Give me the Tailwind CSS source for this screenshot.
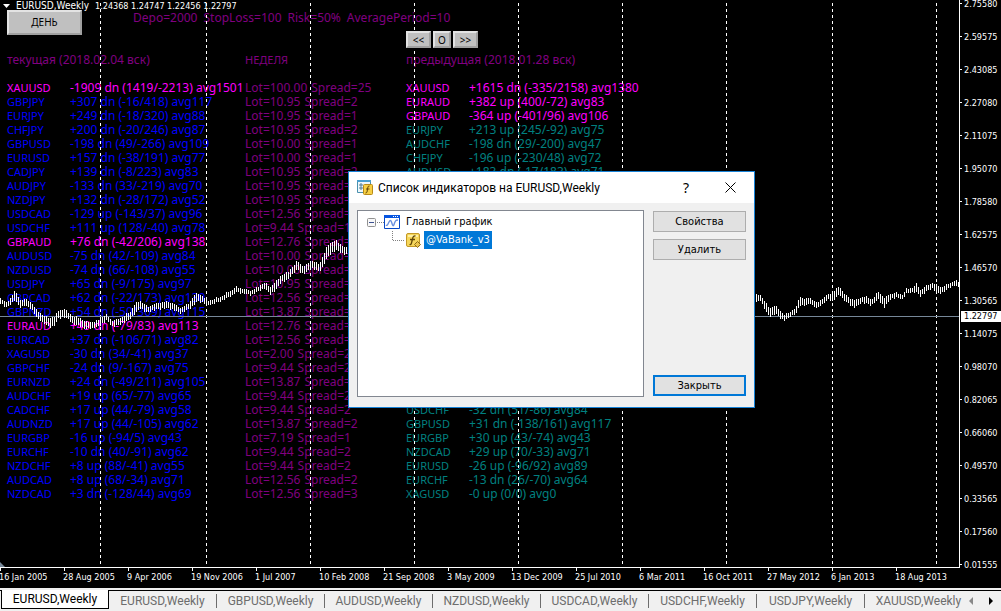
<!DOCTYPE html>
<html lang="ru">
<head>
<meta charset="utf-8">
<title>EURUSD,Weekly</title>
<script src="https://cdn.jsdelivr.net/npm/@tailwindcss/browser@4"></script>
</head>
<body class="flex min-h-screen flex-col overflow-hidden bg-black font-['Noto_Sans','Open_Sans',sans-serif] text-xs">
<main class="flex flex-1">
  <section class="relative min-w-0 flex-1 overflow-hidden border-r border-b border-white whitespace-nowrap text-[#800080]">
    <header class="flex h-3 items-center gap-1.5 pl-[3px] font-['DejaVu_Sans_Condensed','DejaVu_Sans',sans-serif] text-[9px] leading-3 text-white">
      <svg class="h-1 w-[7px]" viewBox="0 0 7 4" fill="#fff"><path d="M0 0H7L3.5 4Z"/></svg>
      <h1 class="text-[10px]">EURUSD,Weekly</h1><span>1.24368 1.24747 1.22456 1.22797</span>
    </header>
    <div class="flex h-10 items-start">
      <button class="-mt-0.5 ml-[7px] h-[25px] w-[75px] border-2 border-t-[#e3e3e3] border-r-[#a0a0a0] border-b-[#a0a0a0] border-l-[#e3e3e3] bg-[#c0c0c0] text-[10px] text-black">ДЕНЬ</button>
      <p class="ml-[51px] flex gap-1.5 leading-3"><span>Depo=2000</span><span>StopLoss=100</span><span>Risk=50%</span><span>AveragePeriod=10</span></p>
    </div>
    <div class="grid grid-cols-[238px_161px_1fr] pl-[7px]">
      <h2 class="flex h-[29px] items-start leading-4">текущая (2018.02.04 вск)</h2>
      <h2 class="text-[11px] leading-4">НЕДЕЛЯ</h2>
      <div class="relative">
        <nav class="absolute -top-[21px] left-0 z-10 flex gap-0.5 text-[10px] leading-3 text-black">
          <button class="h-[17px] w-[25px] border-2 border-t-[#e3e3e3] border-r-[#a0a0a0] border-b-[#a0a0a0] border-l-[#e3e3e3] bg-[#c0c0c0]">&lt;&lt;</button>
          <button class="h-[17px] w-[18px] border-2 border-t-[#e3e3e3] border-r-[#a0a0a0] border-b-[#a0a0a0] border-l-[#e3e3e3] bg-[#c0c0c0]">O</button>
          <button class="h-[17px] w-[25px] border-2 border-t-[#e3e3e3] border-r-[#a0a0a0] border-b-[#a0a0a0] border-l-[#e3e3e3] bg-[#c0c0c0]">&gt;&gt;</button>
        </nav>
        <h2 class="leading-4">предыдущая (2018.01.28 вск)</h2>
      </div>
      <table class="col-span-2 w-full table-fixed border-collapse text-left"><colgroup><col class="w-[63px]"><col class="w-[175px]"><col></colgroup><tbody id="current"></tbody></table>
      <table class="w-80 table-fixed border-collapse self-start text-left"><colgroup><col class="w-[63px]"><col></colgroup><tbody id="previous"></tbody></table>
    </div>
    <svg class="pointer-events-none absolute inset-0 h-full w-full" aria-hidden="true">
      <path d="M100.5 3V564M206.5 3V564M310.5 3V564M414.5 3V564M518.5 3V564M622.5 3V564M726.5 3V564M832.5 3V564M936.5 3V564" stroke="#fff" stroke-dasharray="3 3" fill="none"/>
      <path d="M0 316.5H1000" stroke="#778899"/>
      <path id="bars" stroke="#fff" shape-rendering="crispEdges"/>
      <path d="M0 562L5 567H0Z" fill="#778899"/>
    </svg>
    <section role="dialog" aria-labelledby="dt" class="absolute top-[171px] left-[348px] flex h-[237px] w-[407px] flex-col border border-[#1883d7] bg-[#f0f0f0] text-black">
      <header class="flex h-[31px] items-center bg-white pl-2">
        <svg class="h-4 w-4" viewBox="0 0 16 16"><path d="M.5.5H13.5V12.5H.5Z" fill="#eef7fc" stroke="#4b91ae"/><path d="M0 0H14V2H0Z" fill="#4a9fd0"/><path d="M4 3V10M2 5H6M2 8H6" stroke="#527b91" fill="none"/><rect x="6.5" y="4.5" width="9" height="10" rx="1" fill="#f6cf45" stroke="#b88a16"/><path d="M12.500 6Q11 5.500 10.700 8L10 12Q9.700 13 8.500 13M9 9H12.500" stroke="#654808" fill="none"/></svg>
        <h2 id="dt" class="ml-[5px] flex-1 font-[Roboto,sans-serif]">Список индикаторов на EURUSD,Weekly</h2>
        <button class="w-8 text-sm" aria-label="Справка">?</button>
        <button class="mr-2 ml-3 flex h-8 w-8 items-center justify-center" aria-label="Закрыть окно"><svg class="h-[11px] w-[11px]" viewBox="0 0 11 11"><path d="M.5.5L10.500 10.500M10.500.5L.5 10.500" stroke="#000" fill="none"/></svg></button>
      </header>
      <div class="flex flex-1 gap-[9px] px-2 pt-[7px] pb-2.5 font-['DejaVu_Sans_Condensed','DejaVu_Sans',sans-serif] text-[11px]">
        <ul class="flex-1 border border-[#828790] bg-white pt-0.5 pl-[9px] leading-[18px]">
          <li class="flex h-[18px] items-center">
            <svg class="h-[18px] w-[34px]" viewBox="0 0 34 18"><rect x=".5" y="5.500" width="8" height="8" rx="1" fill="#f8f8f8" stroke="#919191"/><path d="M2 9.500H7" stroke="#3c5191"/><path d="M10 9.500H17" stroke="#808080" stroke-dasharray="1 1"/><path d="M17.500 2.500H32.500V15.500H17.500Z" fill="#fff" stroke="#0748c7"/><path d="M17 2H33V5H17Z" fill="#0755e0"/><path d="M26 3.500H27M28 3.500H29M30 3.500H31" stroke="#fff"/><path d="M19 12Q20 13 21 11L22 9Q23.500 6 24.500 9L25.500 12Q26.500 14 27.500 10L28.500 8Q29 7 31 7" stroke="#6b91df" stroke-width="1.400" fill="none"/></svg>
            <span class="ml-[5px]">Главный график</span>
          </li>
          <li class="flex h-[18px] items-center">
            <svg class="h-[18px] w-[54px]" viewBox="0 0 54 18"><path d="M25.500 0V9M26 9.500H37" stroke="#808080" stroke-dasharray="1 1" fill="none"/><rect x="39.500" y="2.500" width="13" height="13" rx="1.500" fill="#f6d75b" stroke="#c49926"/><path d="M41 4H51V6H41Z" fill="#fff0a3"/><path d="M48.500 5Q46 4.500 45.500 8L44.500 12Q44 14 42.500 13.500M43 8.500H48" stroke="#614607" stroke-width="1.300" fill="none"/><path d="M50.500 10.500L53.500 13.500L50.500 16.500L47.500 13.500Z" fill="#edc64c" stroke="#8d6b17"/></svg>
            <span class="ml-[3px] bg-[#0078d7] px-[2px] text-white">@VaBank_v3</span>
          </li>
        </ul>
        <div class="flex w-[93px] flex-col gap-[7px] pt-px">
          <button class="h-[21px] border border-[#adadad] bg-[#e1e1e1] pt-0.5">Свойства</button>
          <button class="h-[21px] border border-[#adadad] bg-[#e1e1e1] pt-0.5">Удалить</button>
          <button class="mt-auto mb-px h-[21px] border-2 border-[#0078d7] bg-[#e1e1e1] pt-0.5">Закрыть</button>
        </div>
      </div>
    </section>
  </section>
  <aside class="relative w-[41px] font-['DejaVu_Sans_Condensed','DejaVu_Sans',sans-serif] text-[9px] text-white">
    <ol id="prices" class="-mt-[13px] -mb-4"></ol>
    <output class="absolute top-[311px] right-0 left-px bg-white pl-[3px] leading-[11px] text-black">1.22797</output>
  </aside>
</main>
<ol id="dates" class="flex h-5 overflow-hidden bg-black font-['DejaVu_Sans_Condensed','DejaVu_Sans',sans-serif] text-[9px] whitespace-nowrap text-white"></ol>
<footer class="flex h-[23px] items-start border-t-2 border-[#f0f0f0] bg-[#f0f0f0] font-[Roboto,sans-serif] text-xs text-[#6d6d6d]">
  <nav id="tabs" class="flex h-5 min-w-0 flex-1 border-t border-black pl-px whitespace-nowrap"></nav>
  <div class="flex h-5 w-9 items-center gap-4 border-t border-black pl-1">
    <button aria-label="Назад"><svg class="h-2 w-1" viewBox="0 0 4 8"><path d="M4 0V8L0 4Z" fill="#888"/></svg></button>
    <button aria-label="Вперёд"><svg class="h-2 w-1" viewBox="0 0 4 8"><path d="M0 0V8L4 4Z" fill="#000"/></svg></button>
  </div>
</footer>
<script>
const current = `XAUUSD|-1909 dn (1419/-2213) avg1501|100.00|25
GBPJPY|+307 dn (-16/418) avg117|10.95|2
EURJPY|+249 dn (-18/320) avg88|10.95|1
CHFJPY|+200 dn (-20/246) avg87|10.95|2
GBPUSD|-198 dn (49/-266) avg109|10.00|1
EURUSD|+157 dn (-38/191) avg77|10.00|1
CADJPY|+139 dn (-8/223) avg83|10.95|2
AUDJPY|-133 dn (33/-219) avg70|10.95|1
NZDJPY|+132 dn (-28/172) avg52|10.95|2
USDCAD|-129 up (-143/37) avg96|12.56|2
USDCHF|+111 up (128/-40) avg78|9.44|1
GBPAUD|+76 dn (-42/206) avg138|12.76|2
AUDUSD|-75 dn (42/-109) avg84|10.00|1
NZDUSD|-74 dn (66/-108) avg55|10.00|2
USDJPY|+65 dn (-9/175) avg97|10.95|1
GBPCAD|+62 dn (-22/173) avg130|12.56|2
GBPNZD|+54 dn (-50/369) avg115|13.87|2
EURAUD|+49 dn (-79/83) avg113|12.76|2
EURCAD|+37 dn (-106/71) avg82|12.56|2
XAGUSD|-30 dn (34/-41) avg37|2.00|2
GBPCHF|-24 dn (9/-167) avg75|9.44|2
EURNZD|+24 dn (-49/211) avg105|13.87|2
AUDCHF|+19 up (65/-77) avg65|9.44|2
CADCHF|+17 up (44/-79) avg58|9.44|2
AUDNZD|+17 up (44/-105) avg62|13.87|2
EURGBP|-16 up (-94/5) avg43|7.19|1
EURCHF|-10 dn (40/-91) avg62|9.44|2
NZDCHF|+8 up (88/-41) avg55|9.44|2
AUDCAD|+8 up (68/-34) avg71|12.56|2
NZDCAD|+3 dn (-128/44) avg69|12.56|3`.split('\n');
const previous = `XAUUSD|+1615 dn (-335/2158) avg1380
EURAUD|+382 up (400/-72) avg83
GBPAUD|-364 up (-401/96) avg106
EURJPY|+213 up (245/-92) avg75
AUDCHF|-198 dn (29/-200) avg47
CHFJPY|-196 up (-230/48) avg72
AUDUSD|+183 dn (-17/183) avg71
-
USDCHF|-32 dn (51/-86) avg84
GBPUSD|+31 dn (-138/161) avg117
EURGBP|+30 up (43/-74) avg43
NZDCAD|+29 up (70/-33) avg71
EURUSD|-26 up (-96/92) avg89
EURCHF|-13 dn (26/-70) avg64
XAGUSD|-0 up (0/0) avg0`.split('\n');
const hot = ['XAUUSD', 'GBPAUD', 'EURAUD'];
const row = (line, base) => {
  if (line === '-') return '<tr class="h-56"></tr>';
  const [s, v, lot, sp] = line.split('|');
  const c = hot.includes(s) ? 'text-[#ff00ff]' : base;
  return `<tr class="h-3.5 leading-[14px]"><th class="p-0 text-[11px] font-normal ${c}">${s}</th><td class="p-0 ${c}">${v}</td>` +
    (lot ? `<td class="p-0"><span class="flex gap-1"><span>Lot=${lot}</span><span>Spread=${sp}</span></span></td>` : '') + '</tr>';
};
const put = (id, html) => document.getElementById(id).innerHTML = html;
put('current', current.map(l => row(l, 'text-[#0000ff]')).join(''));
put('previous', previous.map(l => row(l, 'text-[#008080]')).join(''));

put('prices', '2.75580 2.59575 2.43085 2.27080 2.11075 1.95070 1.78580 1.62575 1.46570 1.30565 1.14075 0.98070 0.82065 0.66060 0.49570 0.33565 0.17560 0.01555'.split(' ')
  .map(p => `<li class="flex h-[33px] items-center gap-0.5"><span class="h-px w-0.5 bg-white"></span>${p}</li>`).join(''));
put('dates', '16 Jan 2005,28 Aug 2005,9 Apr 2006,19 Nov 2006,1 Jul 2007,10 Feb 2008,21 Sep 2008,3 May 2009,13 Dec 2009,25 Jul 2010,6 Mar 2011,16 Oct 2011,27 May 2012,6 Jan 2013,18 Aug 2013'.split(',')
  .map(d => `<li class="w-16 shrink-0"><span class="block h-[3px] w-px bg-white"></span><span class="-ml-px block leading-3">${d}</span></li>`).join(''));
put('tabs', 'EURUSD EURUSD GBPUSD AUDUSD NZDUSD USDCAD USDCHF USDJPY XAUUSD'.split(' ')
  .map((t, i) => i ? `<a href="#" class="flex w-[108px] shrink-0 items-center justify-center"><span class="flex-1 text-center">${t},Weekly</span><span class="h-3.5 w-px ${i < 8 ? 'bg-[#6d6d6d]' : 'bg-transparent'}"></span></a>`
    : `<a href="#" class="-mt-px flex h-[19px] w-[108px] shrink-0 items-center justify-center border border-t-0 border-black bg-white text-black">${t},Weekly</a>`).join(''));

// Weekly bars: [x, high, low] anchors, interpolated every two pixels
const left = [[0,298,303],[6,303,307],[10,298,304],[14,291,300],[20,300,307],[25,299,305],[31,302,308],[36,310,317],[42,315,322],[49,318,327],[54,317,325],[58,311,318],[64,309,317],[67,312,318],[72,316,323],[80,318,326],[85,322,329],[90,322,328],[95,322,327],[100,318,325],[106,315,320],[112,321,326],[118,319,325],[125,315,322],[130,312,318],[135,303,313],[140,301,308],[147,307,313],[152,305,310],[158,303,309],[165,302,308],[172,303,309],[180,308,313],[187,305,310],[193,296,305],[197,293,301],[203,297,302],[208,301,305],[214,299,303],[220,297,301],[228,292,297],[236,287,292],[243,289,293],[250,291,295],[256,288,292],[260,285,290],[264,283,288],[270,287,294],[275,282,290],[281,275,281],[287,273,280],[292,267,274],[297,261,269],[303,267,274],[308,263,270],[313,261,268],[319,264,271],[323,255,265],[327,246,257],[331,242,253],[336,241,250],[341,245,253],[347,248,254]];
const right = [[756,295,302],[760,295,300],[765,303,310],[769,308,316],[775,306,313],[779,310,317],[784,315,320],[789,313,317],[796,307,313],[799,297,305],[805,299,305],[810,298,303],[816,303,308],[822,299,304],[828,294,299],[832,293,301],[839,286,294],[845,295,301],[850,299,305],[855,300,307],[861,297,302],[867,297,303],[871,300,305],[878,292,299],[884,298,307],[890,294,299],[896,293,297],[902,295,299],[906,289,293],[912,288,292],[916,284,292],[920,290,296],[926,286,291],[932,283,288],[937,286,293],[943,287,292],[950,283,287],[955,281,285],[958,282,287]];
let d = '';
for (const a of [left, right])
  for (let x = a[0][0], i = 0; x <= a[a.length - 1][0]; x += 2) {
    while (i < a.length - 2 && a[i + 1][0] < x) i++;
    const t = (x - a[i][0]) / (a[i + 1][0] - a[i][0]), j = (x * 7 % 5) % 3 - 1;
    const hi = Math.round(a[i][1] + t * (a[i + 1][1] - a[i][1])) + (j > 0 ? -1 : 0);
    const lo = Math.round(a[i][2] + t * (a[i + 1][2] - a[i][2])) + (j < 0 ? 1 : 0);
    d += `M${x}.5 ${hi}V${lo}`;
  }
document.getElementById('bars').setAttribute('d', d);
</script>
</body>
</html>
